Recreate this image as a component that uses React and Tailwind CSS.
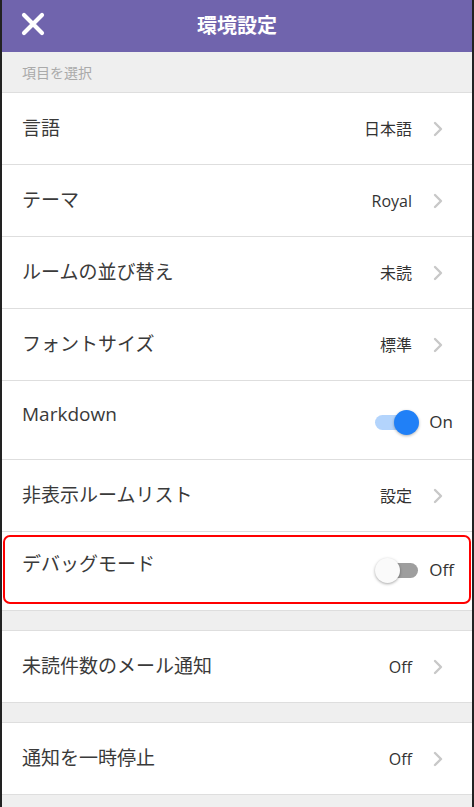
import React from "react";

const font = { fontFamily: '"Open Sans", "Noto Sans CJK JP", sans-serif' };

function Chevron() {
  return (
    <svg width="10" height="16" viewBox="0 0 10 16" className="ml-[21px] mr-[2px]">
      <path d="M2 2 L8 8 L2 14" fill="none" stroke="#c8c8c8" strokeWidth="2.4" strokeLinecap="round" strokeLinejoin="round" />
    </svg>
  );
}

function Row({ label, value }) {
  return (
    <div className="flex h-[72px] items-center justify-between border-b border-[#dedede] bg-white pl-[20px] pr-[27px]">
      <span className="text-[19px] text-[#3a3a3a]">{label}</span>
      <div className="flex items-center">
        <span className="text-[16px] text-[#333]">{value}</span>
        <Chevron />
      </div>
    </div>
  );
}

function Gap() {
  return <div className="h-[20px] border-b border-[#dedede] bg-[#efefef]" />;
}

export default function App() {
  return (
    <div className="h-[807px] w-[474px] overflow-hidden border-l-2 border-r-2 border-[#222] bg-[#efefef]" style={font}>
      <div className="relative flex h-[52px] items-center justify-center bg-[#7064ad]">
        <svg width="24" height="24" viewBox="0 0 24 24" className="absolute left-[19px] top-[12px]">
          <path d="M3 3 L21 21 M21 3 L3 21" stroke="#fff" strokeWidth="4.2" strokeLinecap="round" />
        </svg>
        <span className="text-[20px] font-bold text-white">環境設定</span>
      </div>
      <div className="flex h-[41px] items-center border-b border-[#dedede] bg-[#efefef] pl-[20px]">
        <span className="text-[14px] text-[#aaaaaa]">項目を選択</span>
      </div>
      <Row label="言語" value="日本語" />
      <Row label="テーマ" value="Royal" />
      <Row label="ルームの並び替え" value="未読" />
      <Row label="フォントサイズ" value="標準" />
      <div className="flex h-[79px] items-start justify-between border-b border-[#dedede] bg-white pl-[20px] pr-[19px]">
        <span className="pt-[19px] text-[19px] text-[#3a3a3a]">Markdown</span>
        <div className="flex items-center pt-[28px]">
          <div className="relative h-[24px] w-[44px]">
            <div className="absolute left-[0px] top-[5px] h-[15px] w-[40px] rounded-full bg-[#b3d4fc]" />
            <div className="absolute left-[19px] top-0 h-[25px] w-[25px] rounded-full bg-[#2080f7] shadow-[0_1px_3px_rgba(0,0,0,0.3)]" />
          </div>
          <span className="ml-[10px] text-[17px] text-[#333]">On</span>
        </div>
      </div>
      <Row label="非表示ルームリスト" value="設定" />
      <div className="h-[79px] border-b border-[#dedede] bg-white px-[1px] pt-[3px]">
        <div className="flex h-[69px] items-start justify-between rounded-[7px] border-2 border-[#ff0000] pl-[17px] pr-[15px]">
          <span className="pt-[13px] text-[19px] text-[#3a3a3a]">デバッグモード</span>
          <div className="flex items-center pt-[20px]">
            <div className="relative h-[24px] w-[44px]">
              <div className="absolute left-[3px] top-[5px] h-[15px] w-[40px] rounded-full bg-[#9e9e9e]" />
              <div className="absolute left-0 top-0 h-[25px] w-[25px] rounded-full bg-[#fafafa] shadow-[0_1px_3px_rgba(0,0,0,0.35)]" />
            </div>
            <span className="ml-[10px] text-[17px] text-[#333]">Off</span>
          </div>
        </div>
      </div>
      <Gap />
      <Row label="未読件数のメール通知" value="Off" />
      <Gap />
      <Row label="通知を一時停止" value="Off" />
    </div>
  );
}
